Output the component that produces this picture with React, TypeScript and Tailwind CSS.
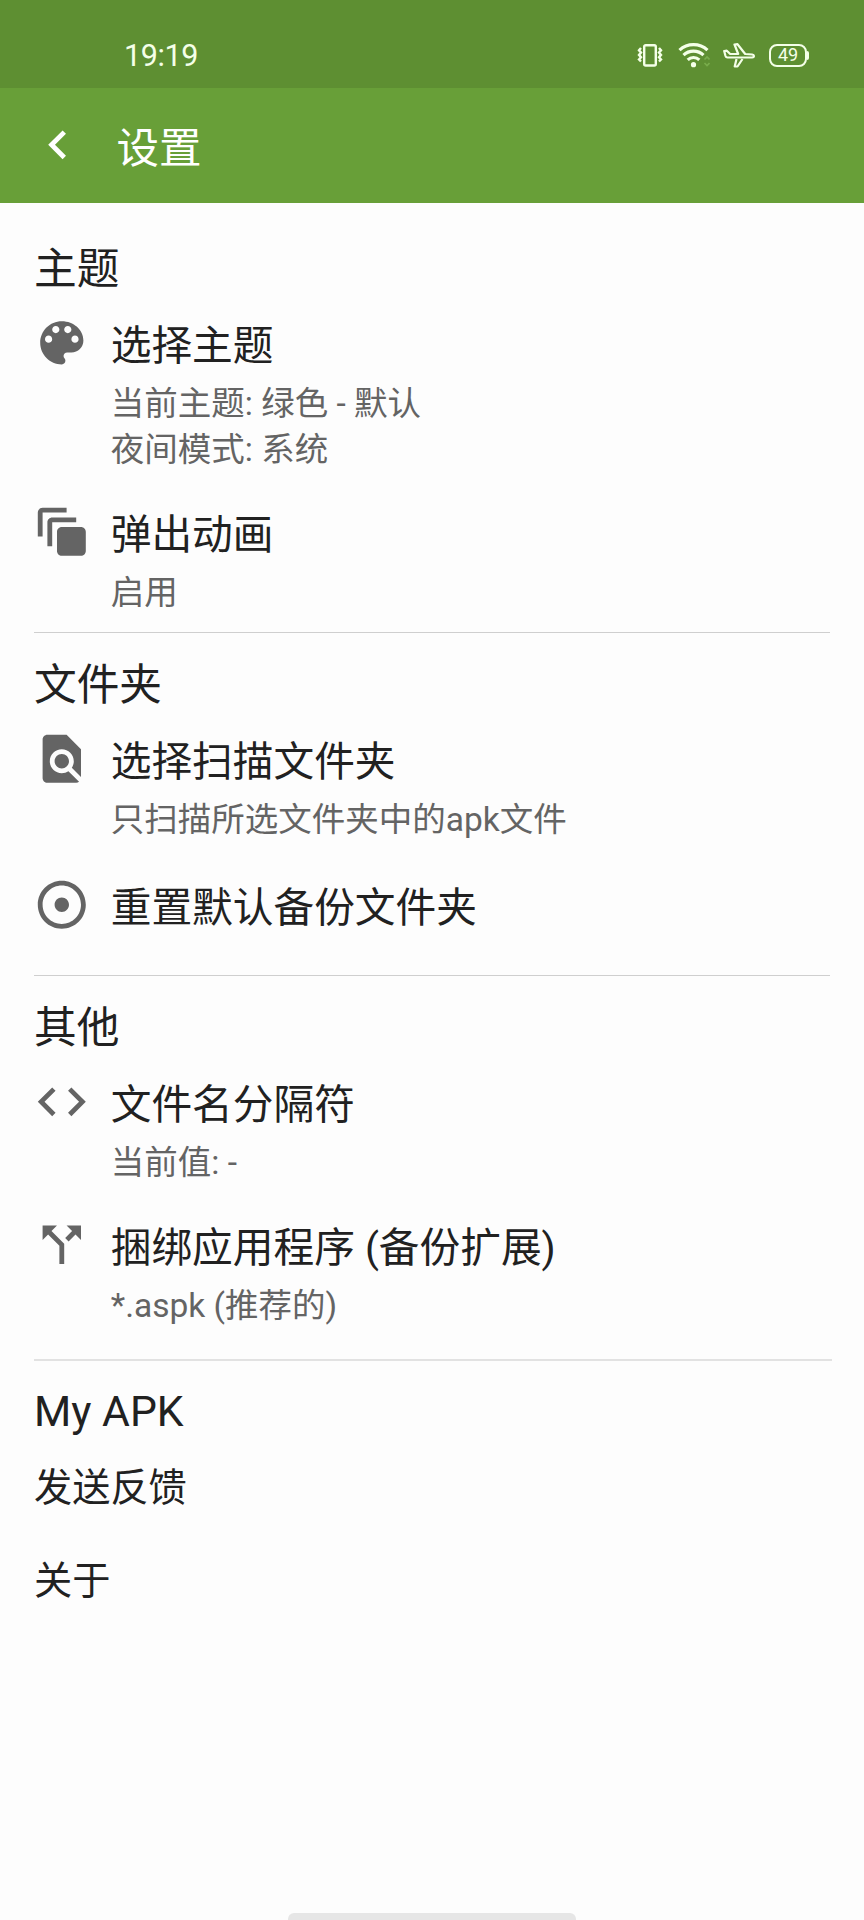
import React from "react";

const icons = {
  palette:
    "M12 3c-4.97 0-9 4.03-9 9s4.03 9 9 9c.83 0 1.5-.67 1.5-1.5 0-.39-.15-.74-.39-1.01-.23-.26-.38-.61-.38-.99 0-.83.67-1.5 1.5-1.5H16c2.76 0 5-2.24 5-5 0-4.42-4.03-8-9-8zm-5.5 9c-.83 0-1.5-.67-1.5-1.5S5.67 9 6.5 9 8 9.67 8 10.5 7.33 12 6.5 12zm3-4C8.67 8 8 7.33 8 6.5S8.67 5 9.5 5s1.5.67 1.5 1.5S10.33 8 9.5 8zm5 0c-.83 0-1.5-.67-1.5-1.5S13.67 5 14.5 5s1.5.67 1.5 1.5S15.33 8 14.5 8zm3 4c-.83 0-1.5-.67-1.5-1.5S16.67 9 17.5 9s1.5.67 1.5 1.5-.67 1.5-1.5 1.5z",
  animation:
    "M14 2H4c-1.11 0-2 .9-2 2v10h2V4h10V2zm4 4H8c-1.11 0-2 .9-2 2v10h2V8h10V6zm2 4h-8c-1.11 0-2 .9-2 2v8c0 1.1.9 2 2 2h8c1.1 0 2-.9 2-2v-8c0-1.1-.9-2-2-2z",
  findInPage:
    "M20 19.59V8l-6-6H6c-1.1 0-1.99.9-1.99 2L4 20c0 1.1.89 2 1.99 2H18c.45 0 .85-.15 1.19-.4l-4.43-4.43c-.8.52-1.74.83-2.76.83-2.76 0-5-2.24-5-5s2.24-5 5-5 5 2.24 5 5c0 1.02-.31 1.96-.83 2.75L20 19.59zM9 13c0 1.66 1.34 3 3 3s3-1.34 3-3-1.34-3-3-3-3 1.34-3 3z",
  adjust:
    "M12 2C6.49 2 2 6.49 2 12s4.49 10 10 10 10-4.49 10-10S17.51 2 12 2zm0 18c-4.41 0-8-3.59-8-8s3.59-8 8-8 8 3.59 8 8-3.59 8-8 8zm3-8c0 1.66-1.34 3-3 3s-3-1.34-3-3 1.34-3 3-3 3 1.34 3 3z",
  code: "M9.4 16.6L4.8 12l4.6-4.6L8 6l-6 6 6 6 1.4-1.4zm5.2 0l4.6-4.6-4.6-4.6L16 6l6 6-6 6-1.4-1.4z",
  split:
    "M14 4l2.29 2.29-2.88 2.88 1.42 1.42 2.88-2.88L20 10V4zm-4 0H4v6l2.29-2.29 4.71 4.7V20h2v-8.41l-5.29-5.3z",
  back: "M15.41 7.41L14 6l-6 6 6 6 1.41-1.41L10.83 12z",
};

const Icon = ({ name }: { name: keyof typeof icons }) => (
  <svg viewBox="0 0 24 24" className="size-[57.6px] shrink-0 fill-current">
    <path d={icons[name]} />
  </svg>
);

const StatusBar = () => (
  <div className="flex h-[88px] justify-between bg-[#5e8f32] pr-[55px] pl-[124px] text-[#f4ffe8]">
    <span className="mt-9 text-[30.5px] leading-10 tracking-[-0.4px]">
      19:19
    </span>
    <div className="mt-[42px] flex h-[26px]">
      {/* vibrate */}
      <svg
        viewBox="0 0 26 26"
        className="mr-[15px] w-[26px] fill-none stroke-current stroke-[2.4]"
      >
        <rect x="7.200" y="3.200" width="11.600" height="20.300" rx="1.500" />
        <path d="M4 6l-2 2.300 2 2.300-2 2.300 2 2.300-2 2.300 2 2M22 6l2 2.300-2 2.300 2 2.300-2 2.300 2 2.300-2 2" />
      </svg>
      {/* wifi */}
      <svg viewBox="0 0 32 26" className="mr-[13px] w-[32px] fill-none">
        <g className="stroke-current stroke-[3.2]">
          <path d="M1.500 8.200a20.500 20.500 0 0 1 28 0" />
          <path d="M5.500 13.200a14.500 14.500 0 0 1 20 0" />
          <path d="M9.700 17.800a8.500 8.500 0 0 1 11.600 0" />
        </g>
        <circle cx="15.500" cy="22.700" r="2.600" className="fill-current" />
        <path
          d="M26.500 17.500l2.500-2.500 2.500 2.500M26.500 21l2.500 2.500 2.500-2.500"
          className="stroke-[#79ad4c] stroke-[1.6]"
        />
      </svg>
      {/* airplane */}
      <svg
        viewBox="0 0 32 26"
        className="mr-[14px] w-[32px] fill-none stroke-current stroke-[2.2] [stroke-linejoin:round]"
      >
        <path d="M1.200 9l2.600-.300 3.400 3.300h8L11.500 2.500l3-.300 7.700 9.800 7 .500c2.300.400 2.300 2.700 0 3H4.500c-1.300 0-1.700-.600-2-1.500z" />
        <path d="M13.500 17l-1.800 7.500h2.800l5-7.500" />
      </svg>
      {/* battery */}
      <div className="flex items-center">
        <div className="flex h-[23px] w-[38px] items-center justify-center rounded-[8px] border-2 border-current text-[18px] leading-none">
          49
        </div>
        <div className="h-[9px] w-[2px] rounded-r-sm bg-current" />
      </div>
    </div>
  </div>
);

interface SectionProps {
  title: string;
  className?: string;
  children: React.ReactNode;
}

const Section = ({ title, className = "", children }: SectionProps) => (
  <section className={`ml-[34px] ${className}`}>
    <h2 className="mb-[21px] text-[42.7px] leading-14">{title}</h2>
    {children}
  </section>
);

interface RowProps {
  icon: keyof typeof icons;
  title: string;
  summary?: string[];
}

const Row = ({ icon, title, summary = [] }: RowProps) => (
  <div className="flex text-[#646464]">
    <div className="-mt-1 -ml-[0.8px] h-14 w-[77.5px]">
      <Icon name={icon} />
    </div>
    <div>
      <h3 className="text-[40.7px] leading-14 text-[#212121]">{title}</h3>
      {summary.length > 0 && (
        <div className="mt-[7px] text-[33.5px] leading-[46px]">
          {summary.map((line) => (
            <p key={line}>{line}</p>
          ))}
        </div>
      )}
    </div>
  </div>
);

const App = () => {
  return (
    <div className="flex h-[1920px] w-[864px] flex-col overflow-hidden bg-[#fdfdfd] font-[Roboto,'Noto_Sans_CJK_SC',sans-serif] text-[#212121]">
      <StatusBar />
      <header className="flex h-[115px] items-center bg-[#689f38] pb-px pl-[29px] text-white">
        <Icon name="back" />
        <h1 className="mt-[7px] ml-[30px] text-[42.5px] leading-14">设置</h1>
      </header>

      <main className="flex-1 pt-[38px]">
        <Section
          title="主题"
          className="mr-[34px] border-b border-[#cfcfcf] pb-4"
        >
          <div className="flex flex-col gap-[34px]">
            <Row
              icon="palette"
              title="选择主题"
              summary={["当前主题: 绿色 - 默认", "夜间模式: 系统"]}
            />
            <Row icon="animation" title="弹出动画" summary={["启用"]} />
          </div>
        </Section>

        <Section
          title="文件夹"
          className="mr-[34px] border-b border-[#cfcfcf] pt-6 pb-[39px]"
        >
          <div className="flex flex-col gap-[37px]">
            <Row
              icon="findInPage"
              title="选择扫描文件夹"
              summary={["只扫描所选文件夹中的apk文件"]}
            />
            <Row icon="adjust" title="重置默认备份文件夹" />
          </div>
        </Section>

        <Section
          title="其他"
          className="mr-8 border-b-2 border-[#e2e2e2] pt-6 pb-[30px]"
        >
          <div className="flex flex-col gap-[34px]">
            <Row icon="code" title="文件名分隔符" summary={["当前值: -"]} />
            <Row
              icon="split"
              title="捆绑应用程序 (备份扩展)"
              summary={["*.aspk (推荐的)"]}
            />
          </div>
        </Section>

        <Section title="My APK" className="pt-[22px]">
          <div className="flex flex-col gap-[37px] text-[38.2px] leading-14">
            <p>发送反馈</p>
            <p>关于</p>
          </div>
        </Section>
      </main>

      <div className="mx-auto h-[7px] w-72 rounded-t-md bg-[#e6e6e6]" />
    </div>
  );
};

export default App;
